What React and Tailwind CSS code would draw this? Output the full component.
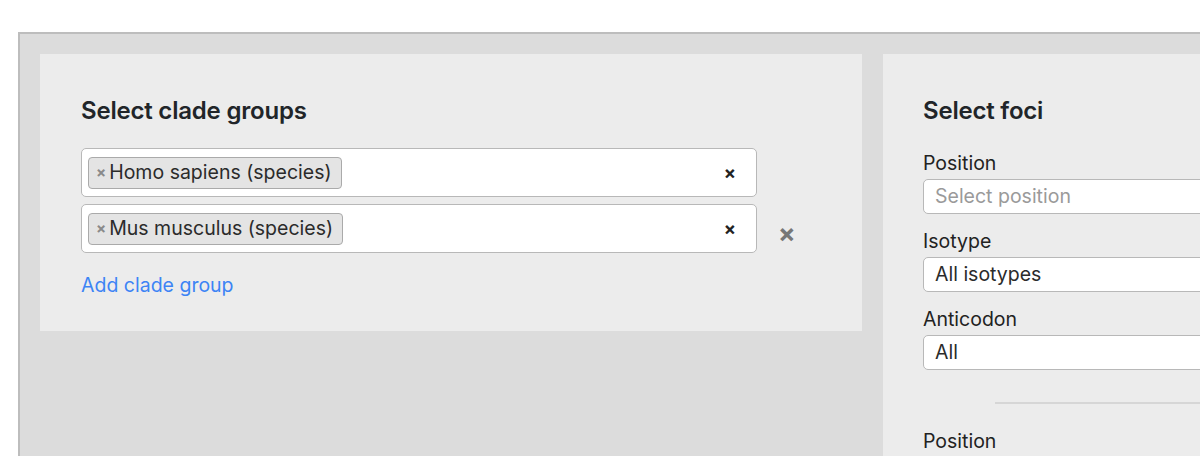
import React from "react";

const Tag = ({ label }) => (
  <span className="flex items-center h-[32px] pl-[7px] pr-[9px] bg-[#e4e4e4] border border-[#aaaaaa] rounded-[4px] text-[19.5px] text-[#2b2b2b]">
    <span className="text-[#8a8a8a] text-[15px] font-bold mr-[3px] leading-none">×</span>
    {label}
  </span>
);

const CladeInput = ({ label }) => (
  <div className="flex items-center w-[676px] h-[49px] bg-white border border-[#b8b8b8] rounded-[5px] pl-[6px] pr-[20px]">
    <Tag label={label} />
    <span className="ml-auto text-[#222] text-[18px] font-bold leading-none">×</span>
  </div>
);

const Field = ({ label, value, placeholder }) => (
  <div className="flex flex-col">
    <label className="text-[19.5px] text-[#222] leading-[26px] mb-[3px]">{label}</label>
    <div className="flex items-center h-[35px] w-[400px] bg-white border border-[#b8b8b8] rounded-[5px] px-[11px] text-[19.5px]">
      {placeholder ? (
        <span className="text-[#9a9a9a]">{placeholder}</span>
      ) : (
        <span className="text-[#2b2b2b]">{value}</span>
      )}
    </div>
  </div>
);

export default function App() {
  return (
    <div
      className="w-[1200px] h-[456px] overflow-hidden bg-white pt-[32px] pl-[18px]"
      style={{ fontFamily: "Inter, 'Noto Sans', sans-serif" }}
    >
      <div className="w-[1300px] h-[500px] bg-[#dcdcdc] border-t-2 border-l-2 border-[#bdbdbd] pt-[20px] pl-[20px] flex items-start gap-[21px]">
        <div className="w-[822px] h-[277px] bg-[#ececec] pt-[42px] pl-[41px]">
          <h2 className="text-[24px] font-semibold text-[#212529] leading-[30px] tracking-[-0.2px]">
            Select clade groups
          </h2>
          <div className="mt-[22px] flex flex-col gap-[7px]">
            <CladeInput label="Homo sapiens (species)" />
            <div className="flex items-center">
              <CladeInput label="Mus musculus (species)" />
              <span className="ml-[21px] mt-[10px] text-[#777] text-[26px] font-bold leading-none">×</span>
            </div>
          </div>
          <a className="block mt-[20px] text-[19.5px] text-[#3d84f5] leading-[24px]">Add clade group</a>
        </div>
        <div className="w-[400px] h-[420px] bg-[#ececec] pt-[42px] pl-[40px] flex flex-col">
          <h2 className="text-[24px] font-semibold text-[#212529] leading-[30px] tracking-[-0.2px] mb-[24px]">
            Select foci
          </h2>
          <div className="flex flex-col gap-[14px]">
            <Field label="Position" placeholder="Select position" />
            <Field label="Isotype" value="All isotypes" />
            <Field label="Anticodon" value="All" />
          </div>
          <hr className="ml-[72px] mt-[32px] border-0 border-t-2 border-[#d6d6d6]" />
          <div className="mt-[24px]">
            <Field label="Position" placeholder="Select position" />
          </div>
        </div>
      </div>
    </div>
  );
}
